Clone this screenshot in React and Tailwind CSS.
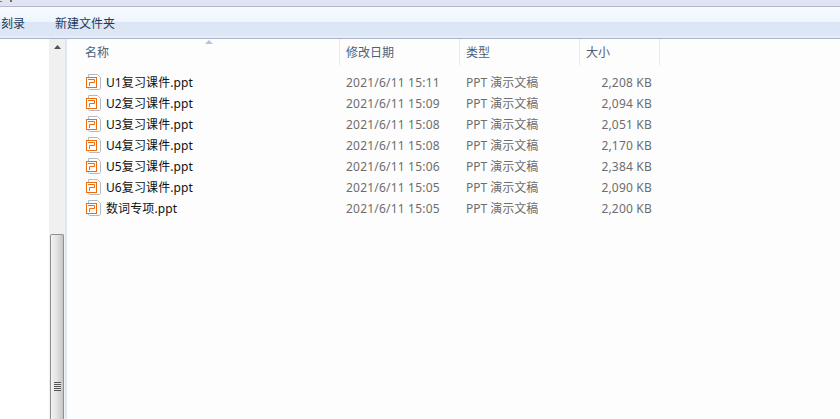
import React from 'react';

const files = [
    { name: 'U1复习课件.ppt', date: '2021/6/11 15:11', size: '2,208 KB' },
    { name: 'U2复习课件.ppt', date: '2021/6/11 15:09', size: '2,094 KB' },
    { name: 'U3复习课件.ppt', date: '2021/6/11 15:08', size: '2,051 KB' },
    { name: 'U4复习课件.ppt', date: '2021/6/11 15:08', size: '2,170 KB' },
    { name: 'U5复习课件.ppt', date: '2021/6/11 15:06', size: '2,384 KB' },
    { name: 'U6复习课件.ppt', date: '2021/6/11 15:05', size: '2,090 KB' },
    { name: '数词专项.ppt', date: '2021/6/11 15:05', size: '2,200 KB' }
];

const columns = [
    { label: '修改日期', width: 'w-[120px]' },
    { label: '类型', width: 'w-[120px]' },
    { label: '大小', width: 'w-[80px]' }
];

function PptIcon() {
    return (
        <svg width="16" height="16" viewBox="0 0 16 16" className="shrink-0 mb-[1px]">
            <path d="M2.5 0.5H11.5L14.5 3.5V14C14.5 15 14 15.5 13 15.5H3.5C3 15.5 2.5 15 2.5 14.5Z" fill="#fff" stroke="#b4b9c2" />
            <rect x="0.5" y="3.5" width="10" height="10" fill="#fff" stroke="#f06a0e" />
            <path d="M2 5.5H8.5V8.5H3.5V12" fill="none" stroke="#f06a0e" />
        </svg>
    );
}

export default function App() {
    return (
        <div className="w-[840px] h-[419px] overflow-hidden flex flex-col bg-[#fdfdfd] font-['Noto_Sans','Noto_Sans_CJK_SC',sans-serif] text-[12px]">
            <div className="h-[6px] shrink-0 flex bg-[#dfe3f3]">
                {/* cut off bits of the title row */}
                <div className="w-[2px] h-[1px] mt-[1px] bg-[#3f7fd0]" />
                <div className="w-[2px] h-[2px] ml-[8px] bg-[#8a6a3a]" />
            </div>

            {/* Toolbar */}
            <div className="h-[33px] shrink-0 flex items-center gap-[30px] pt-[2px] border-y border-t-[#b2b7ce] border-b-[#a9b3c9] bg-[linear-gradient(#f6fbff_0%,#eef5fd_48%,#dde6f4_48%,#dde6f4_90%,#e9f0fa_100%)] text-[#1e395b] pl-[1px]">
                <span>刻录</span>
                <span>新建文件夹</span>
            </div>

            <div className="flex-1 flex min-h-0">
                {/* Nav pane */}
                <div className="w-[49px] shrink-0 bg-white" />

                {/* Scrollbar */}
                <div className="w-[16px] shrink-0 flex flex-col bg-[#f0f0f0]">
                    <div className="h-[195px] shrink-0 flex justify-center pt-[6px]">
                        <svg width="7" height="4" viewBox="0 0 7 4">
                            <path d="M3.5 0L7 4H0Z" fill="#4d5055" />
                        </svg>
                    </div>
                    <div className="flex-1 mx-[1px] flex flex-col items-center pt-[147px] rounded-t-[2px] border border-b-0 border-[#8f8f8f] bg-[linear-gradient(90deg,#f3f3f3,#e4e4e4_45%,#c6c6c6)]">
                        <div className="w-[7px] h-[9px] bg-[repeating-linear-gradient(#555_0,#555_1px,#e6e6e6_1px,#e6e6e6_2px)]" />
                    </div>
                </div>
                <div className="w-[2px] shrink-0 bg-[#dce8f6]" />

                {/* File list */}
                <div className="flex-1 min-w-0 pl-[1px]">
                    <div className="relative flex h-[26px] text-[#4c607a]">
                        <svg width="8" height="4" viewBox="0 0 8 4" className="absolute left-[137px] top-[1px]">
                            <path d="M4 0L8 4H0Z" fill="#b4c6da" />
                        </svg>
                        <div className="w-[272px] pl-[17px] pt-[5px] border-r border-[#e6ebf2]">名称</div>
                        {columns.map((col) => (
                            <div key={col.label} className={`${col.width} pl-[6px] pt-[5px] border-r border-[#e6ebf2]`}>
                                {col.label}
                            </div>
                        ))}
                    </div>

                    <div className="pt-[7px]">
                        {files.map((file) => (
                            <div key={file.name} className="flex items-center h-[21px]">
                                <div className="w-[272px] flex items-center gap-[4px] pl-[18px] text-[#111]">
                                    <PptIcon />
                                    <span className="tracking-[0.1px]">{file.name}</span>
                                </div>
                                <div className="w-[120px] pl-[6px] text-[#6d6d6d] tracking-[0.2px]">{file.date}</div>
                                <div className="w-[120px] pl-[6px] text-[#6d6d6d]">PPT 演示文稿</div>
                                <div className="w-[80px] pr-[8px] text-right text-[#6d6d6d] tracking-[0.2px]">{file.size}</div>
                            </div>
                        ))}
                    </div>
                </div>
            </div>
        </div>
    );
}
